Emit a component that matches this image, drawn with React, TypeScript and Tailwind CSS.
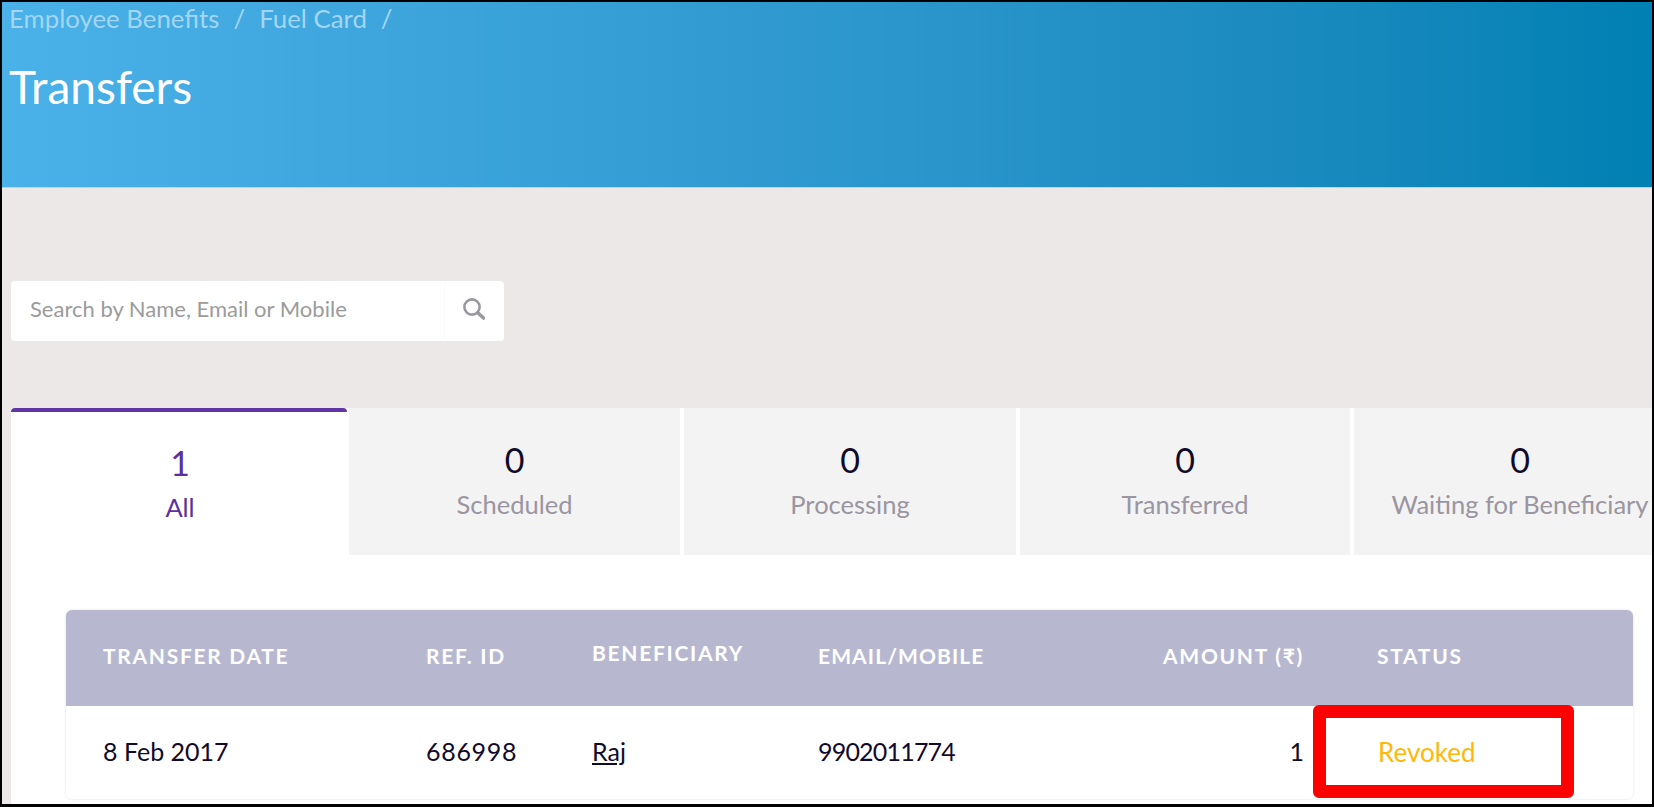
const tabs = [
  { count: "0", label: "Scheduled", width: "w-[331px]" },
  { count: "0", label: "Processing", width: "w-[332px]" },
  { count: "0", label: "Transferred", width: "w-[330px]" },
  { count: "0", label: "Waiting for Beneficiary", width: "w-[332px]" },
];

const columns = "grid-cols-[360px_166px_226px_282px_204px_1fr]";

function SearchIcon() {
  return (
    <svg width="24" height="24" viewBox="0 0 24 24" fill="none" stroke="#98989f" strokeLinecap="round">
      <circle cx="11" cy="10" r="7.6" strokeWidth="2.6" />
      <line x1="17" y1="16" x2="22.5" y2="21" strokeWidth="3.6" />
    </svg>
  );
}

export default function App() {
  return (
    <div className="h-[807px] w-[1654px] overflow-hidden border-x-2 border-t-2 border-b-[3px] border-black bg-[#ece8e8] font-['Lato',sans-serif]">
      {/* blue page header */}
      <header className="h-[186px] border-b border-[#b9d5e2] bg-gradient-to-r from-[#4ab1e9] to-[#0080b3] pl-[7px]">
        <nav className="flex h-[34px] items-center text-[25.8px] leading-none text-[#a3d6f2]">
          <span>Employee Benefits</span>
          <span className="mx-[14px]">/</span>
          <span>Fuel Card</span>
          <span className="mx-[14px]">/</span>
        </nav>
        <h1 className="mt-[26px] text-[46px] leading-[50px] text-white">Transfers</h1>
      </header>

      {/* search strip */}
      <div className="h-[220px] pl-[9px] pt-[93px]">
        <div className="flex h-[60px] w-[493px] rounded-sm bg-white">
          <div className="flex w-[434px] items-center border-r border-[#fafafa] pb-[6px] pl-[19px] text-[22px] text-[#9b9b9b]">
            Search by Name, Email or Mobile
          </div>
          <div className="flex flex-1 items-center justify-center pb-1 pr-1">
            <SearchIcon />
          </div>
        </div>
      </div>

      <div className="ml-[9px] h-[397px] bg-white">
        {/* status tabs */}
        <div className="flex h-[147px] gap-1">
          <div className="-mr-1 flex w-[338px] shrink-0 flex-col items-center">
            <div className="h-1 w-[336px] self-start rounded-t-sm bg-[#5f35a5]" />
            <span className="mt-[30px] text-[34px] leading-[42px] text-[#5a2fa0]">1</span>
            <span className="mt-[9px] text-[25.5px] leading-[28px] text-[#5a2fa0]">All</span>
          </div>
          {tabs.map((tab) => (
            <div key={tab.label} className={`${tab.width} flex shrink-0 flex-col items-center bg-[#f3f3f3]`}>
              <span className="mt-[31px] text-[34px] leading-[42px] text-[#120a2a]">{tab.count}</span>
              <span className="mt-[9px] whitespace-nowrap text-[25.5px] leading-[28px] text-[#9a95a0]">{tab.label}</span>
            </div>
          ))}
        </div>

        {/* transfers table */}
        <div className="relative pl-[55px] pt-[55px]">
          <div className="w-[1567px] rounded-md shadow-[0_0_3px_rgba(0,0,0,0.12)]">
            <div className={`grid h-[96px] ${columns} items-center rounded-t-md bg-[#b7b8d0] pb-[5px] text-[21px] font-bold tracking-[1.7px] text-white`}>
              <span className="pl-[37px]">TRANSFER DATE</span>
              <span>REF. ID</span>
              <span className="pb-[6px]">BENEFICIARY</span>
              <span className="tracking-[1.1px]">EMAIL/MOBILE</span>
              <span className="text-right">AMOUNT (₹)</span>
              <span className="pl-[73px]">STATUS</span>
            </div>
            <div className={`grid h-[93px] ${columns} items-center rounded-b-md bg-white pb-[1px] text-[25px] text-[#120a2a]`}>
              <span className="pl-[37px]">8 Feb 2017</span>
              <span className="tracking-[0.7px]">686998</span>
              <span className="underline">Raj</span>
              <span className="tracking-[-0.8px]">9902011774</span>
              <span className="text-right">1</span>
              <span className="pl-[74px] text-[26px] text-[#ffb80a]">Revoked</span>
            </div>
          </div>
          {/* red annotation box drawn over the status cell */}
          <div className="absolute left-[1302px] top-[150px] h-[93px] w-[261px] rounded-md border-[13px] border-[#ff0000]" />
        </div>
      </div>
    </div>
  );
}
